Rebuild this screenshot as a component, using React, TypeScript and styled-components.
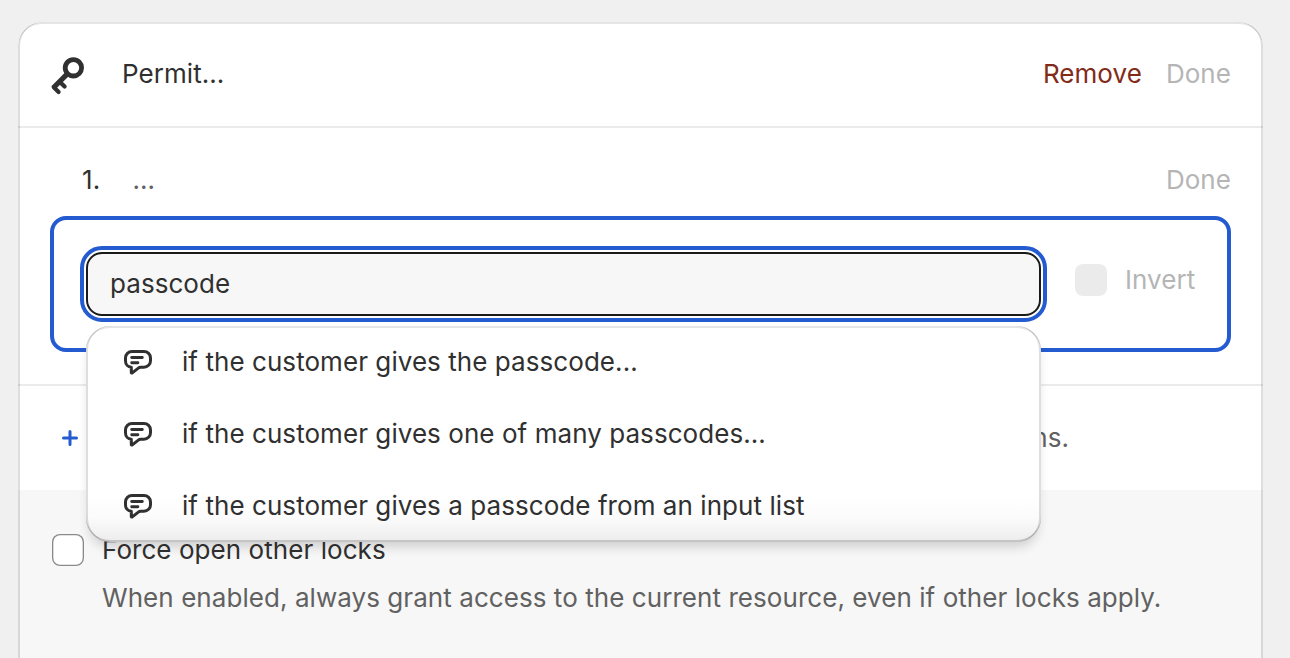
import React from "react";
import styled, { createGlobalStyle } from "styled-components";

const GlobalStyle = createGlobalStyle`
  * { box-sizing: border-box; }
  html, body { margin: 0; height: 100%; overflow: hidden; background: #f0f0f0; }
  body {
    font-family: Inter, "Liberation Sans", sans-serif;
    font-size: 26px;
    line-height: 40px;
    font-weight: 400;
    letter-spacing: 0.06px;
    color: #303030;
    -webkit-font-smoothing: antialiased;
  }
`;

const Page = styled.main`
  height: 658px;
  padding: 22px 27px 0 18px;
  overflow: hidden;
`;

const Card = styled.section`
  position: relative;
  height: 760px;
  background: #fff;
  border-radius: 24px;
  overflow: hidden;
  &::after {
    content: "";
    position: absolute;
    inset: 0;
    border-radius: 24px;
    pointer-events: none;
    box-shadow: inset 2px 0 0 rgba(0, 0, 0, 0.13), inset -2px 0 0 rgba(0, 0, 0, 0.13),
      inset 0 2px 0 rgba(204, 204, 204, 0.5);
  }
`;

const Header = styled.header`
  display: flex;
  align-items: center;
  height: 106px;
  padding: 0 32px 0 30px;
  border-bottom: 2px solid #ebebeb;
`;

const KeySlot = styled.span`
  display: flex;
  width: 74px;
  padding-top: 4px;
`;

const Title = styled.span`
  flex: 1;
`;

const TextButton = styled.button<{ $critical?: boolean }>`
  border: 0;
  padding: 0;
  margin-left: 24px;
  background: none;
  font: inherit;
  letter-spacing: inherit;
  color: ${(p) => (p.$critical ? "#822b19" : "#b5b5b5")};
`;

const Conditions = styled.div`
  height: 258px;
  padding: 32px 32px 0;
  border-bottom: 2px solid #ebebeb;
`;

const ConditionRow = styled.div`
  display: flex;
  align-items: center;
  height: 40px;
  padding-left: 32px;
`;

const Ordinal = styled.span`
  width: 50.5px;
`;

const Summary = styled.span`
  flex: 1;
  color: #616161;
`;

const Editor = styled.div`
  display: flex;
  align-items: flex-start;
  height: 136px;
  margin-top: 16px;
  padding: 32px;
  border: 4px solid #245bd0;
  border-radius: 16px;
`;

const Combobox = styled.div`
  position: relative;
  width: 955px;
  flex: none;
`;

const Input = styled.input`
  display: block;
  width: 100%;
  height: 64px;
  padding: 0 22px 2px;
  border: 2px solid #1a1a1a;
  border-radius: 16px;
  outline: 4px solid #245bd0;
  outline-offset: 2px;
  background: #f7f7f7;
  color: #303030;
  font: inherit;
  letter-spacing: inherit;
`;

const Menu = styled.ul`
  position: absolute;
  z-index: 2;
  top: 74px;
  left: 0;
  width: 100%;
  margin: 0;
  padding: 0;
  list-style: none;
  border-radius: 24px;
  background: linear-gradient(#fff 168px, #fbfbfb 192px, #ececec 216px);
  box-shadow: 0 8px 12px -4px rgba(26, 26, 26, 0.2);
  &::after {
    content: "";
    position: absolute;
    inset: 0;
    border-radius: 24px;
    pointer-events: none;
    box-shadow: inset 2px 0 0 rgba(0, 0, 0, 0.13), inset -2px 0 0 rgba(0, 0, 0, 0.13),
      inset 0 -2px 0 rgba(0, 0, 0, 0.17), inset 0 2px 0 rgba(204, 204, 204, 0.5);
  }
`;

const Option = styled.li`
  display: flex;
  align-items: center;
  gap: 24px;
  height: 72px;
  padding-left: 32px;
`;

const InvertField = styled.label`
  display: flex;
  align-items: center;
  gap: 18px;
  margin-left: 34px;
  margin-top: -4px;
  height: 64px;
  color: #b5b5b5;
`;

const Box = styled.span<{ $disabled?: boolean }>`
  flex: none;
  width: 32px;
  height: 32px;
  border-radius: 8px;
  background: ${(p) => (p.$disabled ? "#ebebeb" : "#fff")};
  box-shadow: ${(p) => (p.$disabled ? "none" : "inset 0 0 0 1.33px #8a8a8a")};
`;

const AddRow = styled.div`
  display: flex;
  align-items: center;
  justify-content: space-between;
  height: 104px;
  padding: 0 194px 0 32px;
  color: #616161;
`;

const Footer = styled.footer`
  display: flex;
  align-items: flex-start;
  gap: 18px;
  height: 300px;
  padding: 44px 34px 0;
  background: #f7f7f7;
`;

const FooterText = styled.div`
  display: flex;
  flex-direction: column;
  gap: 8px;
  margin-top: -4px;
`;

const Help = styled.span`
  color: #616161;
`;

const KeyIcon = () => (
  <svg width="40" height="40" viewBox="0 0 20 20" fill="none" stroke="#303030">
    <circle cx="12.7" cy="5.9" r="4.1" strokeWidth="2.4" />
    <path d="M9.8 8.8 2.6 16" strokeWidth="2.6" />
    <path d="m2.9 15.6 2.4 2.4M6.2 13.2l2.1 2.1" strokeWidth="2.1" strokeLinecap="round" />
  </svg>
);

const ChatIcon = () => (
  <svg width="40" height="40" viewBox="0 0 20 20" fill="none" stroke="#303030" strokeLinecap="round" strokeLinejoin="round">
    <path
      d="M7 4.75h6a3.25 3.25 0 0 1 3.25 3.25v1.35a3.25 3.25 0 0 1-3.25 3.25h-1.6c-.5 0-.9.15-1.25.45L7 15.55l-.35-.15v-2.8A3.1 3.1 0 0 1 3.75 9.5V8A3.25 3.25 0 0 1 7 4.75Z"
      strokeWidth="1.5"
    />
    <path d="M6.85 7.75h5.3M6.85 10.4h3.1" strokeWidth="1.45" />
  </svg>
);

const PlusIcon = () => (
  <svg width="40" height="40" viewBox="0 0 20 20" fill="none" stroke="#245bd0" strokeWidth="1.5" strokeLinecap="round">
    <path d="M10 6.75v6.5M6.75 10h6.5" />
  </svg>
);

const options = [
  "if the customer gives the passcode...",
  "if the customer gives one of many passcodes...",
  "if the customer gives a passcode from an input list",
];

export default function App() {
  return (
    <Page>
      <GlobalStyle />
      <Card>
        <Header>
          <KeySlot>
            <KeyIcon />
          </KeySlot>
          <Title>Permit...</Title>
          <TextButton $critical>Remove</TextButton>
          <TextButton>Done</TextButton>
        </Header>
        <Conditions>
          <ConditionRow>
            <Ordinal>1.</Ordinal>
            <Summary>...</Summary>
            <TextButton>Done</TextButton>
          </ConditionRow>
          <Editor>
            <Combobox>
              <Input defaultValue="passcode" />
              <Menu>
                {options.map((label) => (
                  <Option key={label}>
                    <ChatIcon />
                    {label}
                  </Option>
                ))}
              </Menu>
            </Combobox>
            <InvertField>
              <Box $disabled />
              Invert
            </InvertField>
          </Editor>
        </Conditions>
        <AddRow>
          <PlusIcon />
          <span>conditions.</span>
        </AddRow>
        <Footer>
          <Box />
          <FooterText>
            <span>Force open other locks</span>
            <Help>When enabled, always grant access to the current resource, even if other locks apply.</Help>
          </FooterText>
        </Footer>
      </Card>
    </Page>
  );
}
